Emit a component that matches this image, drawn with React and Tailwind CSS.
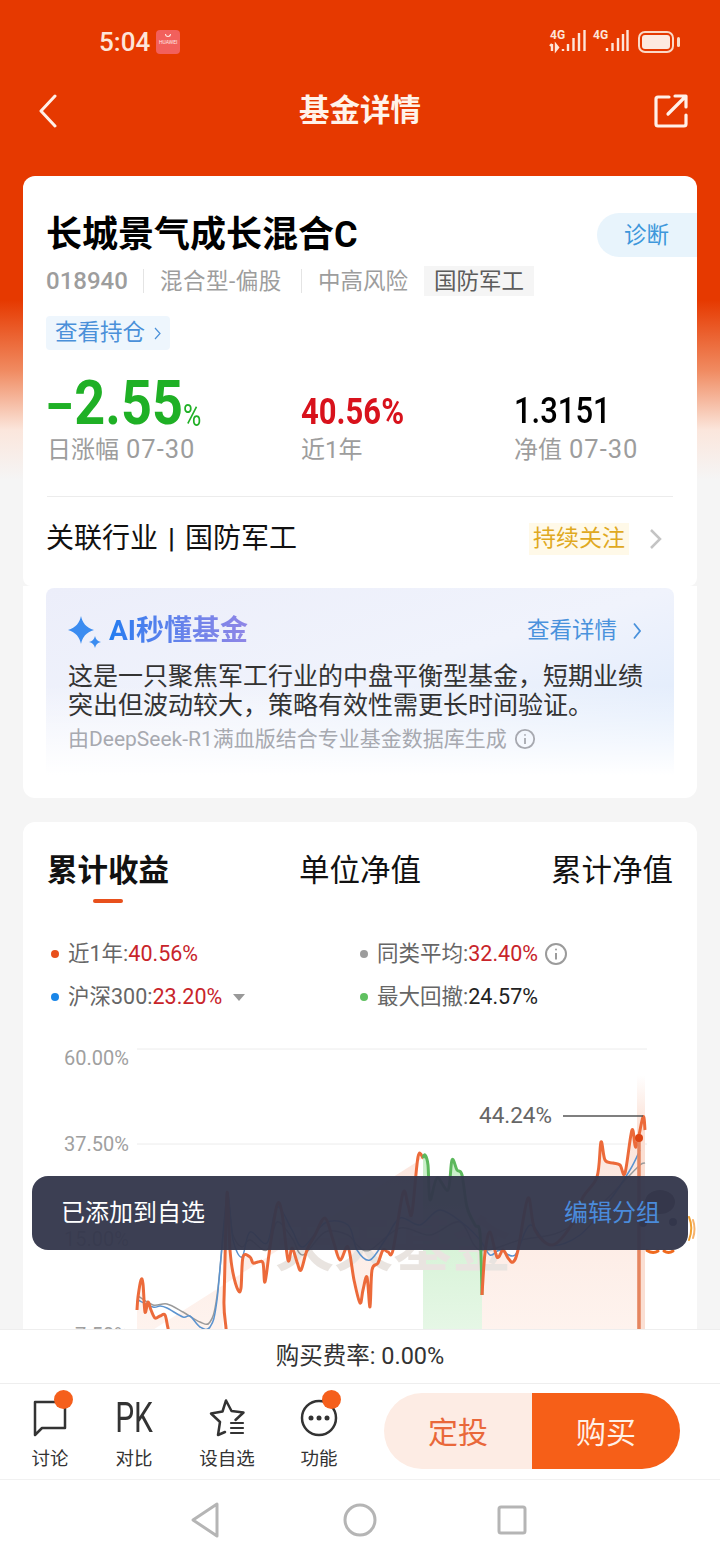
import React from 'react';

const SANS = 'font-["Roboto","Noto_Sans_CJK_SC",sans-serif]';

const ORANGE_LINE = '137,1310 138,1297 141,1280 143,1284 145,1312 148,1302 151,1310 155,1318 160,1316 165,1315 168,1328 172,1340 222,1340 224,1300 227,1193 230,1250 233,1273 238,1290 241,1288 243,1257 250,1257 253,1263 258,1262 263,1263 265,1282 270,1247 277,1205 282,1213 288,1260 292,1248 297,1262 301,1270 307,1250 315,1235 325,1218 333,1240 340,1260 348,1247 354,1280 360,1303 363,1290 367,1277 370,1307 372,1270 378,1263 383,1250 388,1252 393,1250 403,1193 408,1205 412,1213 418,1157 423,1158';
const GREEN_LINE = '423,1158 425,1155 428,1165 430,1200 437,1178 448,1190 452,1160 457,1170 462,1175 467,1207 475,1225 480,1233 482,1295';
const ORANGE_LINE_2 = '482,1295 485,1253 490,1232 497,1257 503,1250 508,1258 513,1262 518,1250 528,1198 535,1230 552,1245 570,1227 583,1197 597,1177 601,1142 605,1160 613,1163 620,1165 625,1173 632,1130 636,1147 643,1117 645,1130';
const BLUE_LINE = '138,1300 153,1307 160,1306 167,1308 183,1317 190,1316 200,1327 210,1327 217,1300 227,1197 233,1240 242,1257 250,1232 267,1243 277,1207 292,1230 303,1247 325,1223 348,1225 357,1250 370,1260 385,1240 400,1218 420,1225 440,1210 465,1225 480,1240 490,1255 500,1250 515,1255 530,1225 550,1245 580,1235 610,1200 630,1170 640,1150';
const GREY_LINE = '138,1296 153,1305 167,1304 183,1312 200,1322 210,1322 217,1296 227,1205 233,1235 242,1247 250,1240 267,1250 277,1222 292,1238 303,1255 325,1232 348,1235 357,1245 370,1250 400,1228 430,1235 460,1222 480,1250 520,1240 560,1232 600,1205 625,1180 640,1165 645,1163';

// catmull-rom through the sampled points so the series don't look jagged
function smooth(points) {
    const p = points.split(' ').map((s) => s.split(',').map(Number));
    let d = `M${p[0][0]} ${p[0][1]}`;
    for (let i = 0; i < p.length - 1; i++) {
        const a = p[Math.max(i - 1, 0)];
        const b = p[i];
        const c = p[i + 1];
        const e = p[Math.min(i + 2, p.length - 1)];
        const c1 = [b[0] + (c[0] - a[0]) / 6, b[1] + (c[1] - a[1]) / 6];
        const c2 = [c[0] - (e[0] - b[0]) / 6, c[1] - (e[1] - b[1]) / 6];
        d += `C${c1[0]} ${c1[1]} ${c2[0]} ${c2[1]} ${c[0]} ${c[1]}`;
    }
    return d;
}

function Chart() {
    return (
        <svg className="absolute left-0 top-0 overflow-visible" width="673" height="290" viewBox="23 1040 673 290" fill="none">
            <defs>
                <linearGradient id="orangeFill" x1="0" y1="1100" x2="0" y2="1330" gradientUnits="userSpaceOnUse">
                    <stop offset="0" stopColor="#fbe3da" />
                    <stop offset="1" stopColor="#fef3ee" />
                </linearGradient>
                <linearGradient id="greenFill" x1="0" y1="1150" x2="0" y2="1330" gradientUnits="userSpaceOnUse">
                    <stop offset="0" stopColor="#c8eec8" />
                    <stop offset="1" stopColor="#e6f7e6" />
                </linearGradient>
                <linearGradient id="bandFill" x1="0" y1="1075" x2="0" y2="1130" gradientUnits="userSpaceOnUse">
                    <stop offset="0" stopColor="#ffffff" />
                    <stop offset="1" stopColor="#fbdfd3" />
                </linearGradient>
            </defs>
            <path d="M137 1049H647M137 1144H647M137 1239H647" stroke="#ececec" strokeWidth="1" />
            <polygon points={`137,1340 ${ORANGE_LINE}`} fill="url(#orangeFill)" />
            <polygon points={`423,1340 ${GREEN_LINE} 482,1340`} fill="url(#greenFill)" />
            <polygon points={`482,1340 ${ORANGE_LINE_2} 645,1340`} fill="url(#orangeFill)" />
            <text x="275" y="1266" fontSize="59" fontWeight="700" fill="#e9e4e0" fontFamily="Noto Sans CJK SC, sans-serif">天天基金</text>
            <rect x="637" y="1075" width="8" height="265" fill="url(#bandFill)" />
            <path d={smooth(GREY_LINE)} stroke="#9a9a9a" strokeWidth="1.500" />
            <path d={smooth(BLUE_LINE)} stroke="#5b93cf" strokeWidth="1.500" />
            <path d={smooth(ORANGE_LINE)} stroke="#ec6a3a" strokeWidth="3" />
            <path d={smooth(GREEN_LINE)} stroke="#5cb85c" strokeWidth="3" />
            <path d={smooth(ORANGE_LINE_2)} stroke="#ec6a3a" strokeWidth="3" />
            <path d="M639 1137V1340" stroke="#e5855f" strokeWidth="3.500" />
            <path d="M563 1116H643" stroke="#555" strokeWidth="1.500" />
            <circle cx="639" cy="1138" r="4" fill="#dd4412" />
            {/* mascot peeking out from behind the toast */}
            <ellipse cx="660" cy="1202" rx="15" ry="12" fill="#4a3a36" />
            <circle cx="673" cy="1222" r="4" fill="#2a2d40" />
            <circle cx="643" cy="1223" r="4" fill="#2a2d40" />
            <path d="M647 1250.500c4 2.500 8 2.500 11 .5M664 1251c3 2 6 2 9 0" stroke="#ef6a1e" strokeWidth="3" strokeLinecap="round" />
            <path d="M689 1217c3 7 3 15 0 23" stroke="#f0a030" strokeWidth="2" strokeLinecap="round" />
            <path d="M693 1220c2 6 2 12 0 18" stroke="#f7b26a" strokeWidth="2" strokeLinecap="round" />
        </svg>
    );
}

function Dot({ color }) {
    return <span className={`w-[8px] h-[8px] rounded-full mr-[9px] ${color}`} />;
}

function InfoIcon({ size = 24, color = '#9b9b9b' }) {
    return (
        <svg width={size} height={size} viewBox="0 0 24 24" fill="none" stroke={color} strokeWidth="2">
            <circle cx="12" cy="12" r="10" />
            <path d="M12 11v6.5" />
            <circle cx="12" cy="7.500" r="1" fill={color} stroke="none" />
        </svg>
    );
}

function StatusBar() {
    return (
        <div className="h-[84px] flex items-start pt-[28px] pl-[99px] pr-[40px] text-[#fde5d9]">
            <span className="text-[26px] leading-[28px] font-medium">5:04</span>
            <div className="ml-[6px] mt-[2px] w-[24px] h-[24px] rounded-[4px] bg-[#f2605c] flex flex-col items-center text-[#ffe9e4]">
                <span className="block w-[6px] h-[3px] mt-[4px] border-b border-x rounded-b-full border-[#ffe9e4]" />
                <span className="text-[5px] leading-[8px] mt-[1px]">HUAWEI</span>
            </div>
            <svg className="ml-auto" width="131" height="26" viewBox="0 0 131 26" fill="none">
                <text x="1" y="11" fontSize="12" fontWeight="700" fill="#fde5d9" fontFamily="Roboto, sans-serif">4G</text>
                <path d="M3 16v7M1 18l2-2M7 17v5l2-2.500ZM14 21v2M19 16v7M24.500 10v13M30 5v18M35.500 2v21" stroke="#fde5d9" strokeWidth="2.400" />
                <text x="44" y="11" fontSize="12" fontWeight="700" fill="#fde5d9" fontFamily="Roboto, sans-serif">4G</text>
                <path d="M58 20v3M63.500 15v8M69 10v13M74 6v17M78.500 2v21" stroke="#fde5d9" strokeWidth="2.400" />
                <rect x="90" y="4" width="34" height="20" rx="6" stroke="#fbd9c6" strokeWidth="2" fill="none" />
                <rect x="93" y="7" width="28" height="14" rx="3" fill="#fdeae0" />
                <rect x="128" y="9" width="3" height="10" rx="1.500" fill="#fbd9c6" />
            </svg>
        </div>
    );
}

function NavBar() {
    return (
        <div className="h-[54px] flex items-center justify-between pl-[38px] pr-[32px] relative">
            <svg width="21" height="34" viewBox="0 0 21 34" fill="none" stroke="#fff0e8" strokeWidth="3" strokeLinecap="round" strokeLinejoin="round">
                <path d="M17 2 3 17l14 15" />
            </svg>
            <span className="absolute inset-x-0 text-center text-[30.500px] leading-[40px] font-bold text-[#fff3ea]">基金详情</span>
            <svg width="34" height="34" viewBox="0 0 34 34" fill="none" stroke="#fff0e8" strokeWidth="3.200" strokeLinecap="round" strokeLinejoin="round">
                <path d="M15 3H4a2 2 0 0 0-2 2v25a2 2 0 0 0 2 2h26a2 2 0 0 0 2-2v-9" />
                <path d="M14 20 31 3M21 2h11v11" />
            </svg>
        </div>
    );
}

function StatLabel({ text, date }) {
    return (
        <div className="text-[24px] leading-[30px] text-[#9d9d9d]">
            {text}
            {date && <span className="text-[25.500px] tracking-[1px] ml-[7px]">{date}</span>}
        </div>
    );
}

function SummaryCard() {
    return (
        <div className="mx-[23px] h-[410px] bg-white rounded-[12px] rounded-b-[8px] relative pt-[36px] mt-[38px]">
            <div className="px-[24px]">
                <h1 className="text-[36px] leading-[46px] font-bold text-black -ml-[1px]">长城景气成长混合C</h1>
                <div className="mt-[8px] flex items-center text-[22.500px] leading-[30px] text-[#9d9d9d]">
                    <span className="font-medium text-[24px] w-[81px] -ml-[1px]">018940</span>
                    <span className="w-px h-[24px] bg-[#e4e4e4] mx-[16px]" />
                    <span className="w-[125px] tracking-[0.5px]">混合型-偏股</span>
                    <span className="w-px h-[24px] bg-[#e4e4e4] mx-[16px]" />
                    <span>中高风险</span>
                    <span className="ml-[16px] px-[10px] bg-[#f5f5f5] text-[#5c5c5c]">国防军工</span>
                </div>
                <div className="mt-[20px] -ml-[1px] inline-flex items-center h-[34px] px-[9px] rounded-[4px] bg-[#eef6fd] text-[#4a90d9] text-[22.500px]">
                    查看持仓
                    <svg className="ml-[9px]" width="7" height="13" viewBox="0 0 7 13" fill="none" stroke="#4a90d9" strokeWidth="1.200"><path d="m1 1 5 5.500-5 5.500" /></svg>
                </div>
                <div className="mt-[14px] flex items-end h-[101px]">
                    <div className="w-[254px]">
                        <div className="text-[#1fb025] font-bold text-[54px] h-[58px] mb-[1px] flex items-center -ml-[3px]">
                            <span className="inline-block leading-[44px] origin-left scale-x-[1.5] mr-[9px]">-</span>
                            <span className="inline-block leading-[44px] scale-y-[1.12]">2.55</span>
                            <span className="inline-block self-end text-[25px] leading-[24px] font-normal scale-y-[1.25] mb-[5px]">%</span>
                        </div>
                        <StatLabel text="日涨幅" date="07-30" />
                    </div>
                    <div className="w-[213px]">
                        <div className="text-[#d8121c] font-bold text-[31px] h-[40px] mb-[3px] flex items-center">
                            <span className="inline-block leading-[32px] scale-y-[1.18]">40.56%</span>
                        </div>
                        <StatLabel text="近1年" />
                    </div>
                    <div>
                        <div className="text-black font-medium text-[31px] h-[40px] mb-[3px] flex items-center">
                            <span className="inline-block leading-[32px] scale-y-[1.18]">1.3151</span>
                        </div>
                        <StatLabel text="净值" date="07-30" />
                    </div>
                </div>
                <div className="h-px bg-[#ececec] mt-[31px]" />
                <div className="h-[84px] flex items-center">
                    <span className="text-[28px] text-[#111] flex items-center -ml-[1px]">
                        关联行业<span className="mx-[10px] font-medium">|</span>国防军工
                    </span>
                    <span className="ml-auto px-[4px] h-[32px] leading-[32px] text-[23px] text-[#e0a91f] bg-[#fff9e8]">持续关注</span>
                    <svg className="ml-[20px] mr-[10px]" width="14" height="22" viewBox="0 0 14 22" fill="none" stroke="#c4c4c4" strokeWidth="2.500"><path d="m2 2 9 9-9 9" /></svg>
                </div>
            </div>
            <div className="absolute right-0 top-[37px] w-[100px] h-[44px] rounded-l-[22px] bg-[#e8f4fc] text-[#3d97db] text-[22.500px] leading-[44px] pl-[27px]">诊断</div>
        </div>
    );
}

function AiCard() {
    return (
        <div className="mx-[23px] h-[212px] bg-white rounded-b-[12px] px-[23px] pt-[2px]">
            <div className="h-[187px] rounded-t-[8px] bg-gradient-to-br from-[#eceefa] via-[#f0f3fc] to-[#dbe9fc] relative overflow-hidden pt-[25px] px-[22px]">
                <div className="absolute inset-x-0 bottom-0 h-[90px] bg-gradient-to-b from-transparent to-white" />
                <div className="relative flex items-center h-[36px]">
                    <svg width="36" height="36" viewBox="0 0 36 36" fill="#3b8cf0" className="-ml-[1px]">
                        <path d="M14 3c1.500 7 5 11.500 13 14-8 2.500-11.500 7-13 14C12.500 24 9 19.500 1 17 9 14.500 12.500 10 14 3Z" />
                        <path d="M28 23c.8 3.500 2.500 5 6 6-3.500 1-5.200 2.500-6 6-.8-3.500-2.500-5-6-6 3.500-1 5.200-2.500 6-6Z" />
                    </svg>
                    <span className="ml-[6px] text-[28px] font-bold bg-gradient-to-r from-[#1f7cf0] to-[#8f86e6] bg-clip-text text-transparent">AI秒懂基金</span>
                    <span className="ml-auto text-[22.500px] text-[#4a92dc]">查看详情</span>
                    <svg className="ml-[16px] mr-[11px]" width="8" height="18" viewBox="0 0 8 18" fill="none" stroke="#4a92dc" strokeWidth="1.800"><path d="m1 1.500 6 7.500-6 7.500" /></svg>
                </div>
                <p className="relative mt-[13px] text-[25px] leading-[29px] text-[#333]">这是一只聚焦军工行业的中盘平衡型基金，短期业绩突出但波动较大，策略有效性需更长时间验证。</p>
                <div className="relative mt-[5px] flex items-center text-[21px] leading-[28px] text-[#a7a9b0]">
                    由DeepSeek-R1满血版结合专业基金数据库生成
                    <span className="ml-[7px] flex"><InfoIcon size={22} color="#a7a9b0" /></span>
                </div>
            </div>
        </div>
    );
}

function ChartCard() {
    return (
        <div className="mx-[23px] mt-[24px] bg-white rounded-t-[12px] h-[520px] relative">
            <div className="flex justify-between px-[24px] pt-[29px] text-[30.500px] leading-[40px] text-[#111]">
                <span className="font-bold relative">
                    累计收益
                    <span className="absolute left-[46px] top-[48px] w-[30px] h-[4px] rounded-full bg-[#e8501c]" />
                </span>
                <span>单位净值</span>
                <span>累计净值</span>
            </div>
            <div className="mt-[49px] pl-[28px] grid grid-cols-[309px_1fr] gap-y-[15px] text-[21.500px] leading-[28px] text-[#666]">
                <div className="flex items-center"><Dot color="bg-[#e8501c]" />近1年:<span className="text-[#c8242a]">40.56%</span></div>
                <div className="flex items-center"><Dot color="bg-[#9c9c9c]" />同类平均:<span className="text-[#c8242a]">32.40%</span><span className="ml-[6px] flex"><InfoIcon /></span></div>
                <div className="flex items-center"><Dot color="bg-[#1a86e8]" />沪深300:<span className="text-[#c8242a]">23.20%</span><span className="ml-[11px] w-0 h-0 border-x-[6px] border-x-transparent border-t-[7px] border-t-[#999]" /></div>
                <div className="flex items-center"><Dot color="bg-[#5fc060]" />最大回撤:<span className="text-[#222]">24.57%</span></div>
            </div>
            <div className="absolute left-0 top-[218px] w-[673px] h-[290px]">
                <Chart />
            </div>
            <span className="absolute left-[41px] top-[222px] text-[20px] leading-[28px] text-[#a0a0a0]">60.00%</span>
            <span className="absolute left-[41px] top-[308px] text-[20px] leading-[28px] text-[#a0a0a0]">37.50%</span>
            <span className="absolute left-[41px] top-[403px] text-[20px] leading-[28px] text-[#a0a0a0]">15.00%</span>
            <span className="absolute left-[52px] top-[499px] text-[20px] leading-[28px] text-[#a0a0a0]">7.50%</span>
            <span className="absolute left-[456px] top-[279px] text-[22.500px] leading-[28px] text-[#666]">44.24%</span>
        </div>
    );
}

function ActionItem({ label, icon, width, badge }) {
    return (
        <div className={`relative flex flex-col items-center ${width}`}>
            <div className="h-[50px] flex items-center">{icon}</div>
            <span className="text-[18.500px] leading-[26px] text-[#333] mt-[3px]">{label}</span>
            {badge}
        </div>
    );
}

function Badge({ className }) {
    return <span className={`absolute w-[19px] h-[19px] rounded-full bg-[#f55f1c] ${className}`} />;
}

function Footer() {
    return (
        <div className="bg-white">
            <div className="h-[55px] pt-[1px] flex items-center justify-center text-[23.500px] text-[#333] border-t border-b border-[#eeeeee]">购买费率: 0.00%</div>
            <div className="h-[96px] flex items-start border-b border-[#f1f1f1] pl-[4px] pt-[9px]">
                <ActionItem
                    width="w-[92px]"
                    label="讨论"
                    badge={<Badge className="left-[50px] -top-[3px]" />}
                    icon={
                        <svg width="34" height="38" viewBox="0 0 34 38" fill="none" stroke="#333" strokeWidth="2.500" strokeLinejoin="round">
                            <path d="M2 3h30v26H9l-7 7V3Z" />
                        </svg>
                    }
                />
                <ActionItem
                    width="w-[76px]"
                    label="对比"
                    icon={<span className="inline-block text-[30px] leading-[24px] text-[#333] scale-y-[1.4]">PK</span>}
                />
                <ActionItem
                    width="w-[110px]"
                    label="设自选"
                    icon={
                        <svg width="40" height="40" viewBox="0 0 40 40" fill="none" stroke="#333" strokeWidth="2.500" strokeLinejoin="round" strokeLinecap="round">
                            <path d="M19 2.500l5.500 10.500 12 1.500-8 7.500M18 34l-7 3 2-13-9-8.500 11.500-2L19 2.500" />
                            <path d="M24 25h12M24 30h12M24 35h12" strokeWidth="2.200" />
                        </svg>
                    }
                />
                <ActionItem
                    width="w-[74px]"
                    label="功能"
                    badge={<Badge className="left-[40px] -top-[3px]" />}
                    icon={
                        <svg width="38" height="38" viewBox="0 0 38 38" fill="none">
                            <circle cx="19" cy="19" r="17" stroke="#333" strokeWidth="2.500" />
                            <circle cx="11" cy="19" r="2.500" fill="#333" />
                            <circle cx="19" cy="19" r="2.500" fill="#333" />
                            <circle cx="27" cy="19" r="2.500" fill="#333" />
                        </svg>
                    }
                />
                <div className="flex ml-[28px] h-[76px] w-[296px] text-[30px]">
                    <div className="w-[148px] rounded-l-[38px] bg-[#fdece4] text-[#e9683a] pt-[3px] flex items-center justify-center">定投</div>
                    <div className="w-[148px] rounded-r-[38px] bg-[#f65f18] text-[#fff0e6] pt-[3px] flex items-center justify-center">购买</div>
                </div>
            </div>
            <div className="h-[80px] flex items-center justify-center pr-[3px] pb-[1px]">
                <svg width="30" height="36" viewBox="0 0 30 36" fill="none" stroke="#b5b5b5" strokeWidth="3" strokeLinejoin="round"><path d="M27 2v32L3 18 27 2Z" /></svg>
                <svg className="ml-[123px]" width="34" height="34" viewBox="0 0 34 34" fill="none" stroke="#b5b5b5" strokeWidth="3"><circle cx="17" cy="17" r="15" /></svg>
                <svg className="ml-[120px]" width="30" height="30" viewBox="0 0 30 30" fill="none" stroke="#b5b5b5" strokeWidth="3" strokeLinejoin="round"><rect x="2" y="2" width="26" height="26" rx="2" /></svg>
            </div>
        </div>
    );
}

export default function App() {
    return (
        <div className={`relative w-[720px] h-[1560px] overflow-hidden flex flex-col bg-[#f5f5f5] ${SANS}`}>
            <div className="h-[1329px] shrink-0 overflow-hidden bg-[linear-gradient(to_bottom,#e63900_0,#e63900_300px,#f08a60_370px,#fbe6dc_430px,#f5f5f5_480px)]">
                <StatusBar />
                <NavBar />
                <SummaryCard />
                <AiCard />
                <ChartCard />
            </div>
            <Footer />

            {/* toast sits above the chart */}
            <div className="absolute left-[32px] top-[1176px] w-[656px] h-[74px] rounded-[16px] bg-[#34374c]/96 flex items-center justify-between pl-[29px] pr-[28px]">
                <span className="text-[24px] text-white">已添加到自选</span>
                <span className="text-[24px] text-[#4a8bdb]">编辑分组</span>
            </div>
        </div>
    );
}
